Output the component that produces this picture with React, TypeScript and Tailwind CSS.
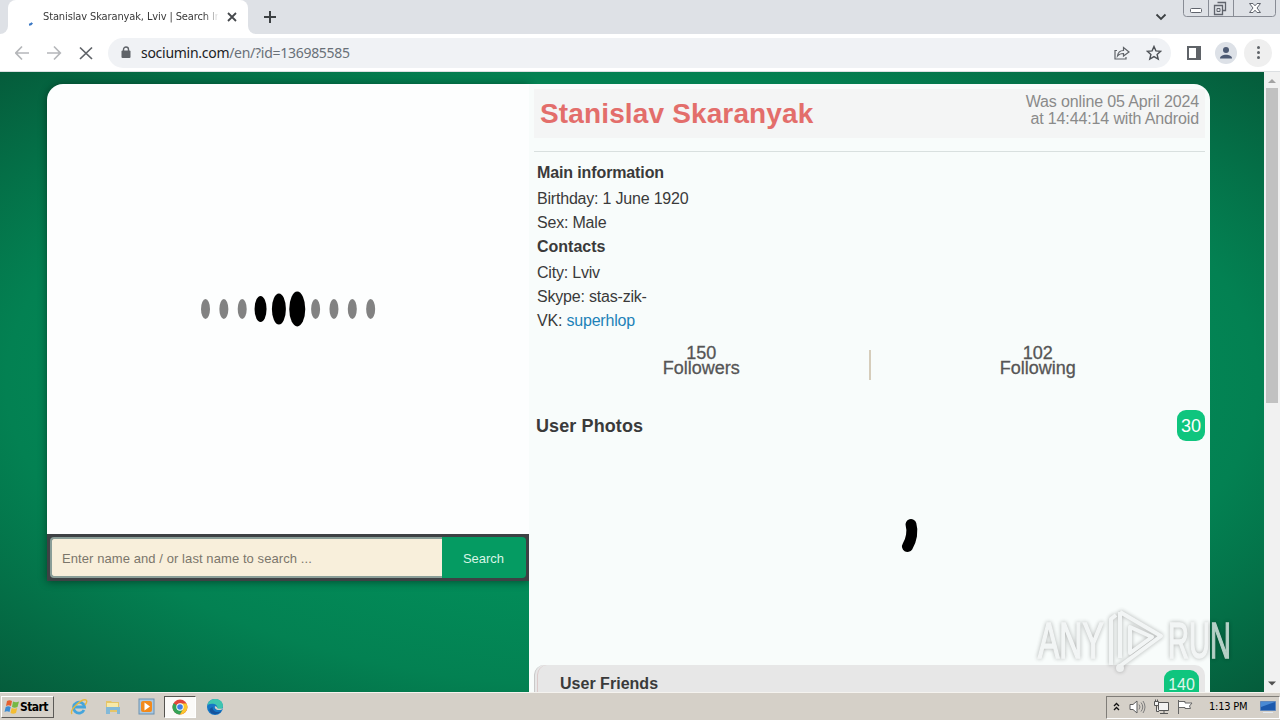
import type { ReactNode } from 'react';

const DOTS = [
  { rx: 4.5, ry: 10, on: false },
  { rx: 4.5, ry: 10, on: false },
  { rx: 4.5, ry: 10, on: false },
  { rx: 6, ry: 13, on: true },
  { rx: 7, ry: 15.5, on: true },
  { rx: 8, ry: 17.5, on: true },
  { rx: 4.5, ry: 10, on: false },
  { rx: 4.5, ry: 10, on: false },
  { rx: 4.5, ry: 10, on: false },
  { rx: 4.5, ry: 10, on: false },
];

function TabStrip() {
  return (
    <div className="flex h-[34px] shrink-0 items-start bg-[#dee1e6]">
      <div className="flex h-[34px] w-2 items-end bg-white">
        <div className="h-[34px] w-2 rounded-br-lg bg-[#dee1e6]" />
      </div>
      <div className="flex h-[34px] w-[240px] items-center rounded-t-lg bg-white pl-[19px]">
        <svg width="8" height="8" viewBox="0 0 8 8" className="mt-3">
          <path d="M2 5.800Q4 5.500 5.200 3.800" stroke="#3b78c4" strokeWidth="2" fill="none" />
        </svg>
        <div className="ml-2 w-[175px] overflow-hidden whitespace-nowrap bg-gradient-to-r from-[#333] from-92% to-[#33333311] bg-clip-text font-['DejaVu_Sans_Condensed','DejaVu_Sans',sans-serif] text-[11px] leading-[18px] tracking-[-0.12px] text-transparent [font-stretch:condensed]">
          Stanislav Skaranyak, Lviv | Search In
        </div>
        <svg width="10" height="10" viewBox="0 0 10 10" className="ml-[9px]">
          <path d="M1 1l8 8M9 1L1 9" stroke="#45484c" strokeWidth="1.8" />
        </svg>
      </div>
      <div className="flex h-[34px] w-2 bg-white">
        <div className="h-[34px] w-2 rounded-bl-lg bg-[#dee1e6]" />
      </div>
      <svg width="12" height="12" viewBox="0 0 12 12" className="mt-[11px] ml-2">
        <path d="M6 0v12M0 6h12" stroke="#3c4043" strokeWidth="2" />
      </svg>
      <svg width="12" height="8" viewBox="0 0 12 8" className="mt-[13px] ml-auto">
        <path d="M1.500 1.500L6 6l4.500-4.500" stroke="#3c4043" strokeWidth="1.8" fill="none" />
      </svg>
      <svg width="94" height="18" viewBox="0 0 94 18" className="mr-[3px] ml-4" fill="none">
        <path d="M.5 0v13.500a3 3 0 0 0 3 3h86a3 3 0 0 0 3-3V0M25.500 0v16M50.500 0v16" stroke="#888c95" />
        <rect x="7.500" y="8.500" width="11" height="4" rx="1" fill="#fff" stroke="#60646d" />
        <path d="M34.500 2.500h8v8h-3M31.500 5.500h8v9h-8z" stroke="#60646d" strokeWidth="1.300" />
        <path d="M34 8.500h3v3h-3z" stroke="#60646d" />
        <path d="M66.500 3.500h3.500l2 2.300 2-2.300h3.500l-3.500 4.500 3.500 4.500h-3.500l-2-2.300-2 2.300h-3.500l3.500-4.500z" fill="#fff" stroke="#60646d" />
      </svg>
    </div>
  );
}

function Toolbar() {
  return (
    <div className="flex h-[38px] shrink-0 items-center border-b border-[#dcdfe2] bg-white pl-[15px]">
      <svg width="80" height="16" viewBox="0 0 80 16" fill="none" strokeWidth="1.700">
        <path d="M14 8H1M7 1.500L.8 8 7 14.500" stroke="#b5b7ba" />
        <path d="M32 8h13M39 1.500L45.300 8 39 14.500" stroke="#b5b7ba" />
        <path d="M65 2.500l12 11.500M77 2.500L65 14" stroke="#5f6368" />
      </svg>
      <div className="ml-[13px] flex h-[30px] w-[1063px] items-center rounded-full bg-[#f0f2f5] pl-[13px]">
        <svg width="10" height="13" viewBox="0 0 10 13">
          <path d="M2.500 5V3.500a2.500 2.500 0 0 1 5 0V5" fill="none" stroke="#5f6368" strokeWidth="1.400" />
          <rect x="0.500" y="4.500" width="9" height="7.500" rx="1" fill="#5f6368" />
        </svg>
        <span className="ml-[10px] whitespace-nowrap font-['Noto_Sans',sans-serif] text-[14px] leading-5 tracking-[-0.28px] text-[#697078]">
          <span className="text-[#202124]">sociumin.com</span>/en/?id=136985585
        </span>
        <svg width="18" height="16" viewBox="0 0 18 16" fill="none" stroke="#5f6368" strokeWidth="1.200" className="ml-auto">
          <path d="M4 5.500H2v8.500h11v-2" />
          <path d="M4.500 11c.5-4 3-5.500 6-5.500V2.500L16 7l-5.500 4V8.500c-3 0-4.500.5-6 2.500z" />
        </svg>
        <svg width="16" height="16" viewBox="0 0 16 16" className="mr-[9px] ml-[15px]">
          <path d="M8 1.500l1.900 4.400 4.800.4-3.600 3.100 1.100 4.700L8 11.600l-4.200 2.500 1.100-4.700-3.600-3.100 4.800-.4z" fill="none" stroke="#4d5156" strokeWidth="1.400" />
        </svg>
      </div>
      <svg width="14" height="14" viewBox="0 0 14 14" className="ml-4">
        <path d="M1 1h12v12H1z" fill="none" stroke="#5f6368" strokeWidth="2" />
        <path d="M9 1h4v12H9z" fill="#5f6368" />
      </svg>
      <svg width="22" height="22" viewBox="0 0 22 22" className="ml-[14px]">
        <circle cx="11" cy="11" r="11" fill="#dde1e7" />
        <circle cx="11" cy="8" r="3" fill="#4d5a73" />
        <path d="M5 16.500c0-5 12-5 12 0z" fill="#4d5a73" />
      </svg>
      <div className="ml-[7px] flex size-7 flex-col items-center justify-center gap-[2px] rounded-full bg-[#efefef]">
        <div className="size-[3px] rounded-full bg-[#5f6368]" />
        <div className="size-[3px] rounded-full bg-[#5f6368]" />
        <div className="size-[3px] rounded-full bg-[#5f6368]" />
      </div>
    </div>
  );
}

function LeftColumn() {
  return (
    <div className="w-[482px] shrink-0">
      <div className="rounded-tl-2xl shadow-[0_1px_8px_rgba(0,0,0,0.45)]">
        <div className="flex h-[450px] items-center justify-center rounded-tl-2xl bg-[#fdfefe]">
          <svg width="184" height="40" viewBox="0 0 184 40">
            {DOTS.map((d, i) => (
              <ellipse key={i} cx={9.5 + i * 18.35} cy="20" rx={d.rx} ry={d.ry} fill={d.on ? '#000' : '#828282'} />
            ))}
          </svg>
        </div>
        <div className="flex h-[47px] bg-[#3e4144] p-[3px]">
          <div className="flex w-[392px] items-center rounded-l-[4px] border-2 border-r-0 border-[#8a9e98] bg-[#f8efdb] pt-[2px] pl-[10px] font-['Liberation_Sans',sans-serif] text-[13px] tracking-[0.08px] text-[#7b766b]">
            Enter name and / or last name to search ...
          </div>
          <div className="flex flex-1 items-center justify-center rounded-r-[4px] bg-[#059b62] pt-[2px] pr-[1px] font-['Liberation_Sans',sans-serif] text-[13px] text-[#d8f5e6]">
            Search
          </div>
        </div>
      </div>
    </div>
  );
}

function Stat({ value, label }: { value: string; label: string }) {
  return (
    <div className="flex-1 text-center text-[18px] leading-[15px] text-[#555] [-webkit-text-stroke:0.3px_#555]">
      {value}
      <br />
      {label}
    </div>
  );
}

function Row({ children }: { children: ReactNode }) {
  return <div className="h-6 text-[16px] leading-6 tracking-[-0.2px]">{children}</div>;
}

function Profile() {
  return (
    <div className="h-[608px] w-[681px] overflow-hidden rounded-tr-2xl bg-[#f8fcfb] pt-[5px] pr-[5px] pl-[5px] font-['Liberation_Sans',sans-serif] text-[#3a3a3a]">
      <div className="flex h-[49px] justify-between bg-[#f4f5f5] pr-[6px] pl-[6px]">
        <h1 className="pt-[5px] text-[28px] leading-[40px] font-bold tracking-[0.14px] text-[#e36e6b]">Stanislav Skaranyak</h1>
        <div className="pt-1 text-right text-[16px] leading-[17px] tracking-[-0.13px] text-[#8a8a8a]">
          Was online 05 April 2024
          <br />
          at 14:44:14 with Android
        </div>
      </div>
      <div className="mt-[13px] border-t border-[#d9e0df] pt-2 pl-[3px]">
        <div className="h-[27px] text-[16px] leading-[26px] font-bold tracking-[-0.12px]">Main information</div>
        <Row>Birthday: 1 June 1920</Row>
        <Row>Sex: Male</Row>
        <div className="h-[26px] text-[16px] leading-6 font-bold">Contacts</div>
        <Row>City: Lviv</Row>
        <Row>Skype: stas-zik-</Row>
        <Row>
          VK: <span className="text-[#1d82b8]">superhlop</span>
        </Row>
      </div>
      <div className="mt-[13px] flex h-[34px]">
        <Stat value="150" label="Followers" />
        <div className="mt-[4px] h-[30px] w-[2px] bg-[#d6cdbb]" />
        <Stat value="102" label="Following" />
      </div>
      <div className="mt-[30px] flex h-[31px] items-center justify-between pl-[2px]">
        <h2 className="pt-[2px] text-[18px] font-bold tracking-[0.1px]">User Photos</h2>
        <div className="flex h-[31px] w-7 items-center justify-center rounded-[9px] bg-[#0fc57e] pt-px text-[18px] text-white">30</div>
      </div>
      <div className="flex h-[224px] pt-[75px] pl-[363px]">
        <svg width="26" height="40" viewBox="0 0 26 40">
          <path d="M14 8.500C16 15 14.500 24 10.500 30.500" stroke="#000" strokeWidth="11" strokeLinecap="round" fill="none" />
        </svg>
      </div>
      <div className="flex h-10 justify-between rounded-t-[10px] border-l border-[#c9c9c9] bg-[#e7e7e7] pr-[6px] pl-[2px]">
        <div className="flex-1 rounded-tl-[10px] border-l border-[#dbcaca] pt-[7px] pl-[22px] text-[16px] leading-6 font-bold tracking-[0.02px]">User Friends</div>
        <div className="mt-[5px] h-[34px] w-[35px] rounded-[9px] bg-[#0fc57e] pt-[3px] text-center text-[16px] text-[#e0f6ec]">140</div>
      </div>
    </div>
  );
}

function Watermark() {
  return (
    <div className="absolute top-[608px] left-[1038px] flex items-center opacity-75 drop-shadow-[0_0_2px_rgba(0,0,0,0.4)]">
      <div className="flex w-[68px] font-['Liberation_Sans',sans-serif] text-[50px] leading-[66px] text-[#f1f3f3] [-webkit-text-stroke:1.500px_#f1f3f3]">
        <span className="inline-block origin-left scale-x-[0.64]">ANY</span>
      </div>
      <svg width="62" height="66" viewBox="0 0 62 66" fill="none" stroke="#f1f3f3" strokeWidth="4" strokeLinejoin="round">
        <path d="M14 4v46M14 4L55 28 14 58" />
        <path d="M24 19v26l22-16zM5 57V11l5-4" />
        <circle cx="14" cy="60" r="2" />
      </svg>
      <div className="flex w-[64px] font-['Liberation_Sans',sans-serif] text-[50px] leading-[66px] text-[#f1f3f3] [-webkit-text-stroke:1.500px_#f1f3f3]">
        <span className="inline-block origin-left scale-x-[0.58]">RUN</span>
      </div>
    </div>
  );
}

function Scrollbar() {
  return (
    <div className="flex w-4 shrink-0 flex-col items-center bg-[#f1f1f1]">
      <svg width="16" height="16" viewBox="0 0 16 16">
        <path d="M4 11l4-4 4 4z" fill="#a3a3a3" />
      </svg>
      <div className="h-[315px] w-3 bg-[#c1c1c1]" />
      <svg width="16" height="16" viewBox="0 0 16 16" className="mt-auto">
        <path d="M4 5.500h8l-4 4z" fill="#505050" />
      </svg>
    </div>
  );
}

function Taskbar() {
  return (
    <div className="flex h-7 shrink-0 items-center border-t border-[#f5f3ef] bg-[#d5d0c8] pt-px">
      <div className="ml-px flex h-[22px] w-[53px] items-center border border-t-white border-r-[#5c5a57] border-b-[#5c5a57] border-l-white pl-[2px]">
        <svg width="16" height="16" viewBox="0 0 16 16">
          <path d="M3 2q2.500-1.500 5 0L7 7Q4.500 5.500 2 7z" fill="#e5602f" />
          <path d="M9 2.500q3 1.500 6 0L13.500 8q-3 1.500-5.500 0z" fill="#76b843" />
          <path d="M1.700 8q2.500-1.500 5 0l-1.200 5Q3 11.500.5 13z" fill="#3c8cd4" />
          <path d="M7.700 9q3 1.500 5.500 0L12 14q-3 1.500-5.500 0z" fill="#f4bd32" />
        </svg>
        <span className="font-['DejaVu_Sans_Condensed','DejaVu_Sans',sans-serif] text-[12px] font-bold tracking-[-0.6px] text-black [font-stretch:condensed]">Start</span>
      </div>
      <svg width="18" height="18" viewBox="0 0 18 18" className="ml-4" fill="none">
        <path d="M14 12A5.500 5.500 0 1 1 14.500 9H5" stroke="#45a5dc" strokeWidth="2.800" />
        <path d="M2 16C-1 12 12 0 16 2c1.500 1 .5 3-1 5" stroke="#e6b83f" strokeWidth="1.400" />
      </svg>
      <svg width="18" height="18" viewBox="0 0 18 18" className="ml-4">
        <path d="M2 3h5l1 1h7v10H2z" fill="#e5c568" />
        <path d="M3 5h11v5H3z" fill="#f8e9a8" />
        <path d="M2 9h14v7h-3v-4H6v4H2z" fill="#83b9d8" />
      </svg>
      <svg width="18" height="18" viewBox="0 0 18 18" className="ml-4">
        <rect x="1" y="1" width="15" height="15" fill="#a8c8e2" stroke="#6d91b0" />
        <rect x="3" y="3" width="11" height="11" rx="2" fill="#f28a1c" />
        <path d="M6.500 4.500v8L12 8.500z" fill="#fff" />
      </svg>
      <div className="ml-2 flex h-[22px] w-8 items-center justify-center border border-t-[#55534f] border-r-white border-b-white border-l-[#55534f] bg-[#fbfaf8]">
        <svg width="16" height="16" viewBox="0 0 16 16">
          <circle cx="8" cy="8" r="7.500" fill="#e2463a" />
          <path d="M8 8L1.500 4.250A7.500 7.500 0 0 0 8 15.500l3.500-6z" fill="#35a457" />
          <path d="M8 8l3.500 1.500-3.500 6A7.500 7.500 0 0 0 14.500 4.500H8z" fill="#fbc72e" />
          <circle cx="8" cy="8" r="3.700" fill="#fff" />
          <circle cx="8" cy="8" r="2.800" fill="#3d7ee6" />
        </svg>
      </div>
      <svg width="18" height="18" viewBox="0 0 18 18" className="ml-[10px]">
        <circle cx="9" cy="9" r="8" fill="#1677c5" />
        <path d="M1.500 7C3-1.500 17-1 17 8c0 3-3 4-6 3 2-4-4-7-9.500-4z" fill="#3fc5b0" />
        <path d="M6.500 9c0 5 5 6 9 4-4 5-12 4-12-2z" fill="#15539d" />
        <path d="M9 8c-1 3 2 5 7 3.500l1-1.500c-3 1.500-6 1-6-1z" fill="#d5d0c8" />
      </svg>
      <div className="ml-auto flex h-[23px] w-[174px] items-center border border-t-[#807d78] border-r-white border-b-white border-l-[#807d78] pl-[6px]">
        <svg width="7" height="10" viewBox="0 0 7 10" fill="none" stroke="#111" strokeWidth="1.300">
          <path d="M1 4l2.500-2.500L6 4M1 8l2.500-2.500L6 8" />
        </svg>
        <svg width="17" height="16" viewBox="0 0 17 16" fill="#fff" stroke="#5e5e5e" className="ml-[9px]">
          <path d="M1 5.500h3L8 2v12l-4-3.500H1z" />
          <path d="M10 5.500q2 2.500 0 5M12 3.500q3.500 4.500 0 9M14 2q4 6 0 12" fill="none" stroke="#7d7d7d" />
        </svg>
        <svg width="18" height="16" viewBox="0 0 18 16" fill="#f2f2f2" stroke="#555" className="ml-[7px]">
          <path d="M5.500 3.500h10v8h-10zM7 14.500h8M11 12v2" />
          <path d="M1.500 2.500h4v4h-4zM2.500.5v2M4.500.5v2M3.500 6.500v6H6" />
        </svg>
        <svg width="18" height="16" viewBox="0 0 18 16" fill="#fff" stroke="#666" className="ml-[6px]">
          <path d="M1.500 1v14M1.500 2.500H8v1.500h7l-2.500 3 1 2.500H8V8.500H1.500z" />
        </svg>
        <span className="ml-[14px] w-[43px] whitespace-nowrap font-['DejaVu_Sans_Condensed','DejaVu_Sans',sans-serif] text-[11px] tracking-[-0.22px] text-black [font-stretch:condensed]">1:13 PM</span>
        <svg width="16" height="14" viewBox="0 0 16 14" className="ml-[8px]">
          <path d="M.5 1.500h15v9H.5z" fill="#1c59ad" stroke="#5f87bc" />
          <path d="M1 2h14L1 7z" fill="#4a8ad4" />
          <path d="M3 12.500h10" stroke="#e3e9f0" />
        </svg>
      </div>
    </div>
  );
}

export default function App() {
  return (
    <div className="relative flex h-[720px] w-[1280px] flex-col overflow-hidden">
      <TabStrip />
      <Toolbar />
      <div className="flex h-[620px] shrink-0">
        <div className="flex w-[1264px] bg-[radial-gradient(ellipse_at_50%_50%,#00a567_0%,#038152_70%,#055c3b_100%)] pt-3 pl-[47px]">
          <LeftColumn />
          <Profile />
        </div>
        <Scrollbar />
      </div>
      <Taskbar />
      <Watermark />
    </div>
  );
}
